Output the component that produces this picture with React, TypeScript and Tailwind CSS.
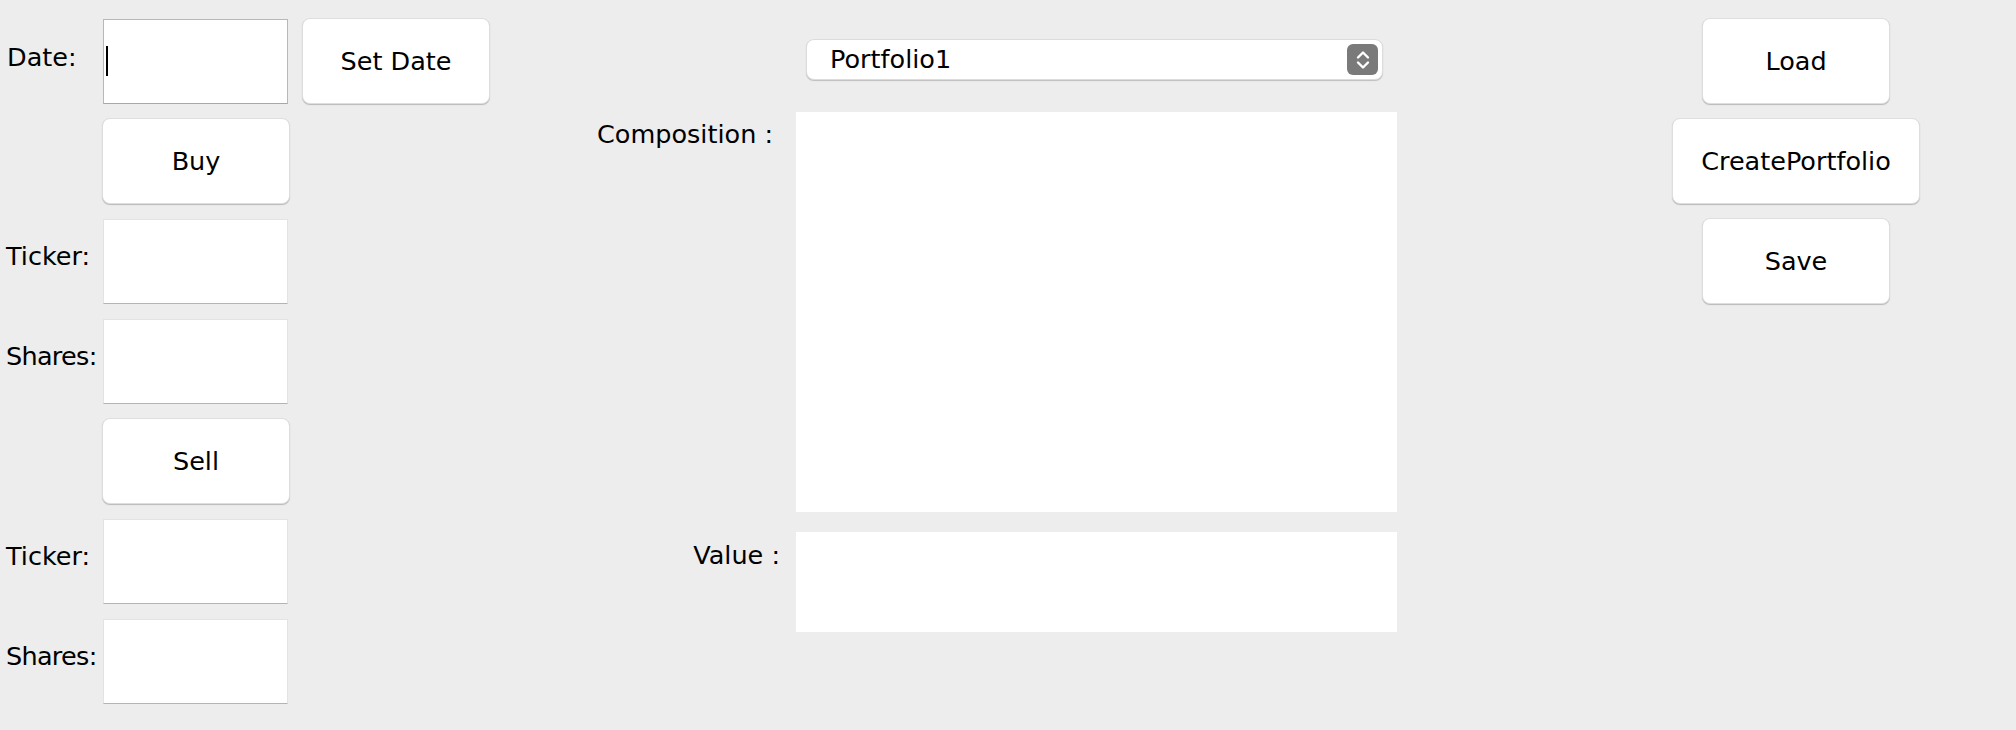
import React from "react";

const btn =
  "bg-white rounded-[8px] border border-[#dedede] shadow-[0_1px_1px_rgba(0,0,0,0.22)] flex items-center justify-center";
const field =
  "bg-white border border-[#e3e3e3] border-b-[#b4b4b4] w-[185px] h-[85px] ml-px outline-none";

function FieldRow({ label, tight }: { label: string; tight?: boolean }) {
  return (
    <div className="flex h-[86px] items-center">
      <span className={`w-[102px] pl-[6px] pb-[9px] ${tight ? "tracking-[-0.7px]" : ""}`}>{label}</span>
      <input className={field} />
    </div>
  );
}

function ButtonRow({ label }: { label: string }) {
  return (
    <div className="flex h-[86px]">
      <div className="w-[102px]" />
      <button className={`${btn} w-[188px] h-[86px]`}>{label}</button>
    </div>
  );
}

export default function App() {
  return (
    <div className="min-h-screen w-full bg-[#ededed] font-['DejaVu_Sans',sans-serif] text-[25.5px] text-black flex">
      {/* left: trade form */}
      <div className="flex flex-col gap-[14px] pt-[18px] w-[490px] shrink-0">
        <div className="flex h-[86px] items-center">
          <span className="w-[102px] pl-[7px] pb-[8px]">Date:</span>
          <div className="ml-px w-[185px] h-[85px] bg-white border border-[#b8b8b8] border-b-[#a8a8a8] flex items-center pl-[2px]">
            <span className="w-[2px] h-[30px] bg-black" />
          </div>
          <button className={`${btn} ml-[14px] w-[188px] h-[86px]`}>Set Date</button>
        </div>
        <ButtonRow label="Buy" />
        <FieldRow label="Ticker:" />
        <FieldRow label="Shares:" tight />
        <ButtonRow label="Sell" />
        <FieldRow label="Ticker:" />
        <FieldRow label="Shares:" tight />
      </div>

      {/* middle: portfolio view */}
      <div className="flex flex-col pt-[39px] ml-[90px] w-[817px] shrink-0">
        <div className="ml-[226px] w-[577px] h-[41px] rounded-[8px] bg-white border border-[#dcdcdc] shadow-[0_1px_1px_rgba(0,0,0,0.2)] flex items-center justify-between pl-[23px] pr-[4px]">
          <span>Portfolio1</span>
          <div className="w-[31px] h-[31px] rounded-[6px] bg-[#7a7a7a] flex items-center justify-center">
            <svg width="20" height="24" viewBox="0 0 20 24" fill="none" stroke="white" strokeWidth="2.4" strokeLinecap="round" strokeLinejoin="round">
              <path d="M5 9.5 L10 4.5 L15 9.5" />
              <path d="M5 14.5 L10 19.5 L15 14.5" />
            </svg>
          </div>
        </div>
        <div className="flex mt-[32px]">
          <span className="w-[216px] text-right pr-[23px] pt-[3px]">Composition :</span>
          <div className="w-[601px] h-[400px] bg-white" />
        </div>
        <div className="flex mt-[20px]">
          <span className="w-[216px] text-right pr-[16px] pt-[4px]">Value :</span>
          <div className="w-[601px] h-[100px] bg-white" />
        </div>
      </div>

      {/* right: file actions */}
      <div className="flex flex-col items-center gap-[14px] pt-[18px] ml-[275px] w-[248px] shrink-0">
        <button className={`${btn} w-[188px] h-[86px]`}>Load</button>
        <button className={`${btn} w-[248px] h-[86px]`}>CreatePortfolio</button>
        <button className={`${btn} w-[188px] h-[86px]`}>Save</button>
      </div>
    </div>
  );
}
